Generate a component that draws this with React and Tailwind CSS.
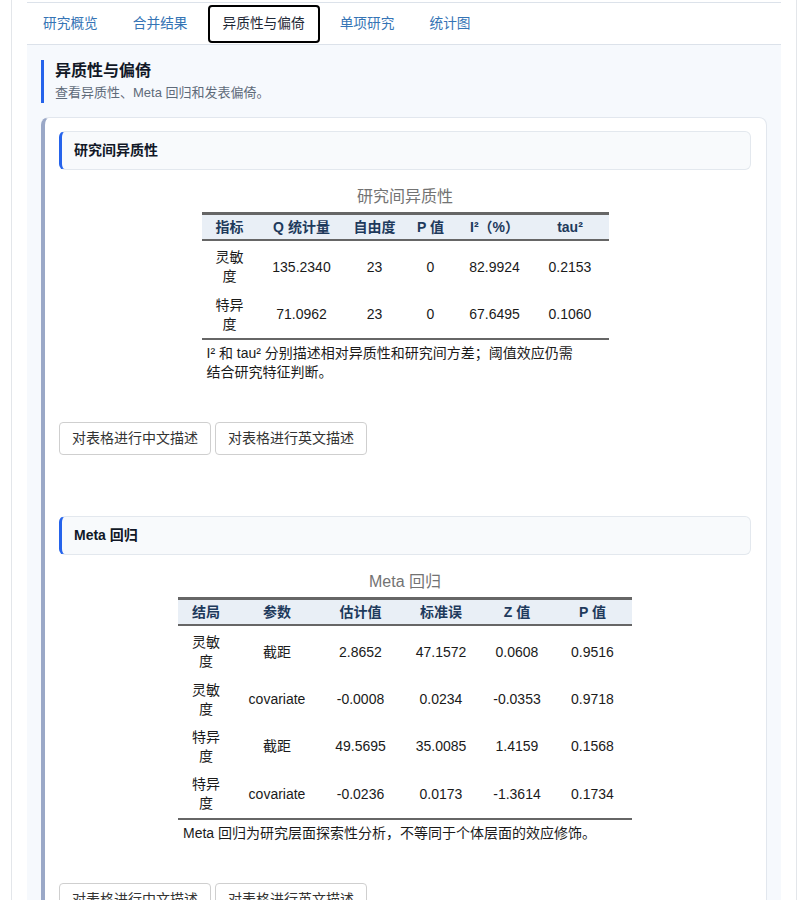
import React from 'react';

const tabs = ['研究概览', '合并结果', '异质性与偏倚', '单项研究', '统计图'];

const heteroTable = {
  caption: '研究间异质性',
  widths: [56, 88, 58, 54, 74, 77],
  head: ['指标', 'Q 统计量', '自由度', 'P 值', 'I²（%）', 'tau²'],
  rows: [
    [['灵敏', '度'], '135.2340', '23', '0', '82.9924', '0.2153'],
    [['特异', '度'], '71.0962', '23', '0', '67.6495', '0.1060'],
  ],
  note: ['I² 和 tau² 分别描述相对异质性和研究间方差；阈值效应仍需', '结合研究特征判断。'],
};

const metaTable = {
  caption: 'Meta 回归',
  widths: [56, 86, 81, 80, 72, 79],
  head: ['结局', '参数', '估计值', '标准误', 'Z 值', 'P 值'],
  rows: [
    [['灵敏', '度'], '截距', '2.8652', '47.1572', '0.0608', '0.9516'],
    [['灵敏', '度'], 'covariate', '-0.0008', '0.0234', '-0.0353', '0.9718'],
    [['特异', '度'], '截距', '49.5695', '35.0085', '1.4159', '0.1568'],
    [['特异', '度'], 'covariate', '-0.0236', '0.0173', '-1.3614', '0.1734'],
  ],
  note: ['Meta 回归为研究层面探索性分析，不等同于个体层面的效应修饰。'],
};

const DataTable = ({ data }) => {
  const total = data.widths.reduce((a, b) => a + b, 0);
  return (
    <div className="flex flex-col items-center mt-[17px]">
      <div className="text-[16px] leading-[20px] text-[#737373] mb-[5px]">{data.caption}</div>
      <table className="table-fixed border-collapse" style={{ width: total }}>
        <colgroup>
          {data.widths.map((w, i) => (
            <col key={i} style={{ width: w }} />
          ))}
        </colgroup>
        <thead>
          <tr className="bg-[#e9eff6] border-t-[3px] border-b-[2px] border-[#666666]">
            {data.head.map((h) => (
              <th key={h} className="text-[14px] leading-[19px] py-[2.5px] font-bold text-[#1e3a5c] text-center whitespace-nowrap">
                {h}
              </th>
            ))}
          </tr>
        </thead>
        <tbody className="border-b-[2px] border-[#666666]">
          {data.rows.map((row, ri) => (
            <tr key={ri}>
              {row.map((c, ci) => (
                <td
                  key={ci}
                  className={`text-[14px] leading-[19px] pb-[4.67px] text-center text-[#1a1a1a] whitespace-nowrap ${
                    ri === 0 ? 'pt-[7.2px]' : 'pt-[4.67px]'
                  }`}
                >
                  {Array.isArray(c) ? (
                    <>
                      {c[0]}
                      <br />
                      {c[1]}
                    </>
                  ) : (
                    c
                  )}
                </td>
              ))}
            </tr>
          ))}
        </tbody>
        <tfoot>
          <tr>
            <td colSpan={6} className="pt-[4px] px-[5px] text-[14px] leading-[19px] text-[#1a1a1a] text-left">
              {data.note.map((line, i) => (
                <div key={i}>{line}</div>
              ))}
            </td>
          </tr>
        </tfoot>
      </table>
    </div>
  );
};

const Section = ({ title, data, first }) => (
  <div className={first ? '' : 'mt-[61px]'}>
    <div className="h-[39px] flex items-center rounded-[6px] border border-[#e3e8ee] border-l-[3px] border-l-[#2563eb] bg-[#f8fafc] pl-[12px]">
      <span className="text-[14px] font-bold text-[#111827]">{title}</span>
    </div>
    <DataTable data={data} />
    <div className="flex gap-[4px] mt-[40px]">
      <button className="h-[33px] w-[152px] rounded-[4px] border border-[#cfcfcf] bg-white text-[14px] text-[#333333]">
        对表格进行中文描述
      </button>
      <button className="h-[33px] w-[152px] rounded-[4px] border border-[#cfcfcf] bg-white text-[14px] text-[#333333]">
        对表格进行英文描述
      </button>
    </div>
  </div>
);

export default function App() {
  return (
    <div
      className="min-h-[900px] bg-white"
      style={{ fontFamily: '"Liberation Sans", "Noto Sans CJK SC", sans-serif' }}
    >
      <div className="ml-[11px] w-[786px] min-h-[900px] border-x border-[#e3e6ea] px-[15px] pt-[2px]">
        <nav className="flex items-end gap-[5px] h-[43px] border-y border-[#dce2ea] pl-[1px] pb-[1px]">
          {tabs.map((t) => {
            const active = t === '异质性与偏倚';
            return (
              <div
                key={t}
                className={`h-[38px] px-[13px] flex items-center rounded-[4px] border-2 text-[13.7px] ${
                  active ? 'border-black bg-white text-[#1f2937]' : 'border-transparent text-[#3574b5]'
                }`}
              >
                {t}
              </div>
            );
          })}
        </nav>
        <div className="bg-[#f6f9fd] px-[14px] pt-[15px] pb-[40px]">
          <div className="border-l-[3px] border-[#2563eb] pl-[11px]">
            <div className="text-[16px] leading-[22px] font-bold text-[#111827]">异质性与偏倚</div>
            <div className="text-[13px] leading-[21px] text-[#5f6b7a]">查看异质性、Meta 回归和发表偏倚。</div>
          </div>
          <div className="mt-[14px] rounded-[8px] border border-[#e2e7ee] border-l-[4px] border-l-[#9aa8c7] bg-white pt-[13px] pl-[14px] pr-[15px] pb-[40px]">
            <Section title="研究间异质性" data={heteroTable} first />
            <Section title="Meta 回归" data={metaTable} />
          </div>
        </div>
      </div>
    </div>
  );
}
